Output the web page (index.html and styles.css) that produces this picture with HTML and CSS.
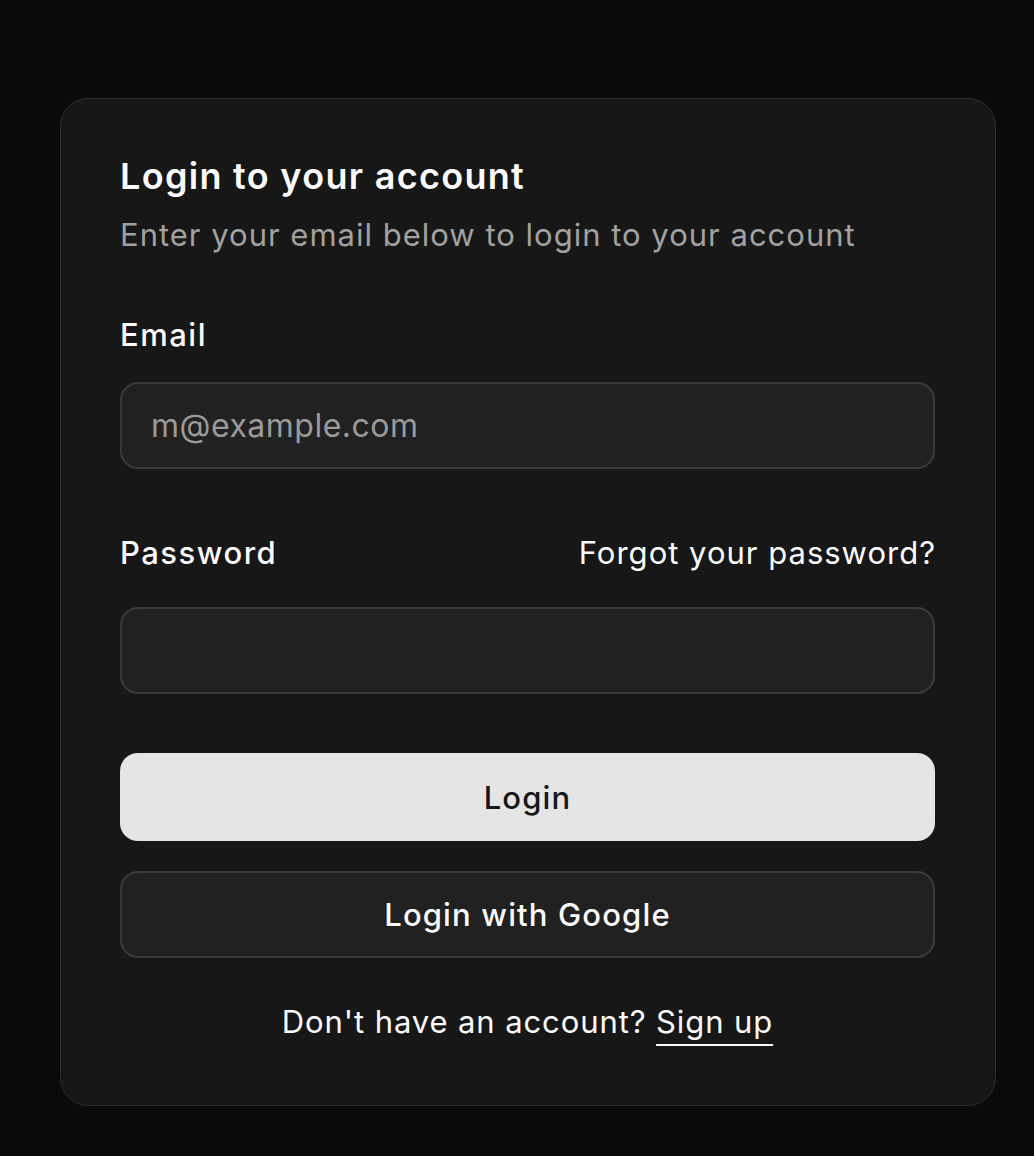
FILE: index.html
```html
<!DOCTYPE html>
<html lang="en">
<head>
<meta charset="utf-8">
<title>Login</title>
<link rel="stylesheet" href="styles.css">
</head>
<body>
<div class="card">
  <div class="card-header">
    <h1 class="title">Login to your account</h1>
    <p class="desc">Enter your email below to login to your account</p>
  </div>
  <form class="form">
    <div class="field field-email">
      <label class="label" for="email">Email</label>
      <input class="input" id="email" type="email" placeholder="m@example.com">
    </div>
    <div class="field field-password">
      <div class="label-row">
        <label class="label" for="password">Password</label>
        <a class="forgot" href="#">Forgot your password?</a>
      </div>
      <input class="input" id="password" type="password">
    </div>
    <div class="actions">
      <button type="button" class="btn btn-primary">Login</button>
      <button type="button" class="btn btn-outline">Login with Google</button>
    </div>
    <p class="signup">Don't have an account? <a href="#" class="signup-link">Sign up</a></p>
  </form>
</div>
</body>
</html>
```

FILE: styles.css
```css
* { box-sizing: border-box; }
html, body {
  margin: 0;
  padding: 0;
  background: #0a0a0a;
}
body {
  font-family: Inter, "Noto Sans", sans-serif;
  color: #fafafa;
  padding: 98px 38px 0 60px;
  height: 1156px;
  overflow: hidden;
}
.card {
  width: 936px;
  height: 1008px;
  background: #171717;
  border: 1px solid #2c2c2c;
  border-radius: 28px;
  padding: 60px 60px 0 59px;
  display: flex;
  flex-direction: column;
}
.card-header {
  display: flex;
  flex-direction: column;
}
.title {
  margin: 0;
  font-size: 36px;
  line-height: 34px;
  font-weight: 600;
  letter-spacing: 1.3px;
  color: #fafafa;
}
.desc {
  margin: 22px 0 0;
  font-size: 31px;
  line-height: 40px;
  letter-spacing: 1px;
  color: #a1a1a1;
}
.form {
  display: flex;
  flex-direction: column;
  margin-top: 60px;
}
.field {
  display: flex;
  flex-direction: column;
}
.label {
  font-size: 31px;
  line-height: 40px;
  font-weight: 500;
  letter-spacing: 1.5px;
  color: #fafafa;
}
.field-email .label { margin-bottom: 27px; }
.field-password { margin-top: 64px; }
.label-row {
  display: flex;
  justify-content: space-between;
  align-items: center;
  margin-bottom: 34px;
}
.forgot {
  font-size: 31px;
  line-height: 40px;
  letter-spacing: 1px;
  margin-right: -1px;
  color: #fafafa;
  text-decoration: none;
}
.input {
  width: 100%;
  height: 87px;
  background: #212121;
  border: 2px solid #3a3a3a;
  border-radius: 18px;
  padding: 0 29px;
  font-family: inherit;
  font-size: 32px;
  letter-spacing: 0.5px;
  color: #fafafa;
  outline: none;
}
.input::placeholder { color: #9a9a9a; }
.actions {
  display: flex;
  flex-direction: column;
  gap: 30px;
  margin-top: 59px;
}
.btn {
  width: 100%;
  height: 88px;
  border-radius: 18px;
  font-family: inherit;
  font-size: 31px;
  font-weight: 500;
  letter-spacing: 1.15px;
  cursor: pointer;
}
.btn-primary {
  background: #e5e5e5;
  color: #171717;
  border: none;
}
.btn-outline {
  height: 87px;
  background: #212121;
  color: #fafafa;
  border: 2px solid #3a3a3a;
}
.signup {
  margin: 44px 0 0;
  text-align: center;
  font-size: 31px;
  line-height: 40px;
  letter-spacing: 0.9px;
  color: #fafafa;
}
.signup-link {
  color: #fafafa;
  text-decoration: underline;
  text-decoration-thickness: 2px;
  text-underline-offset: 11px;
}
```
